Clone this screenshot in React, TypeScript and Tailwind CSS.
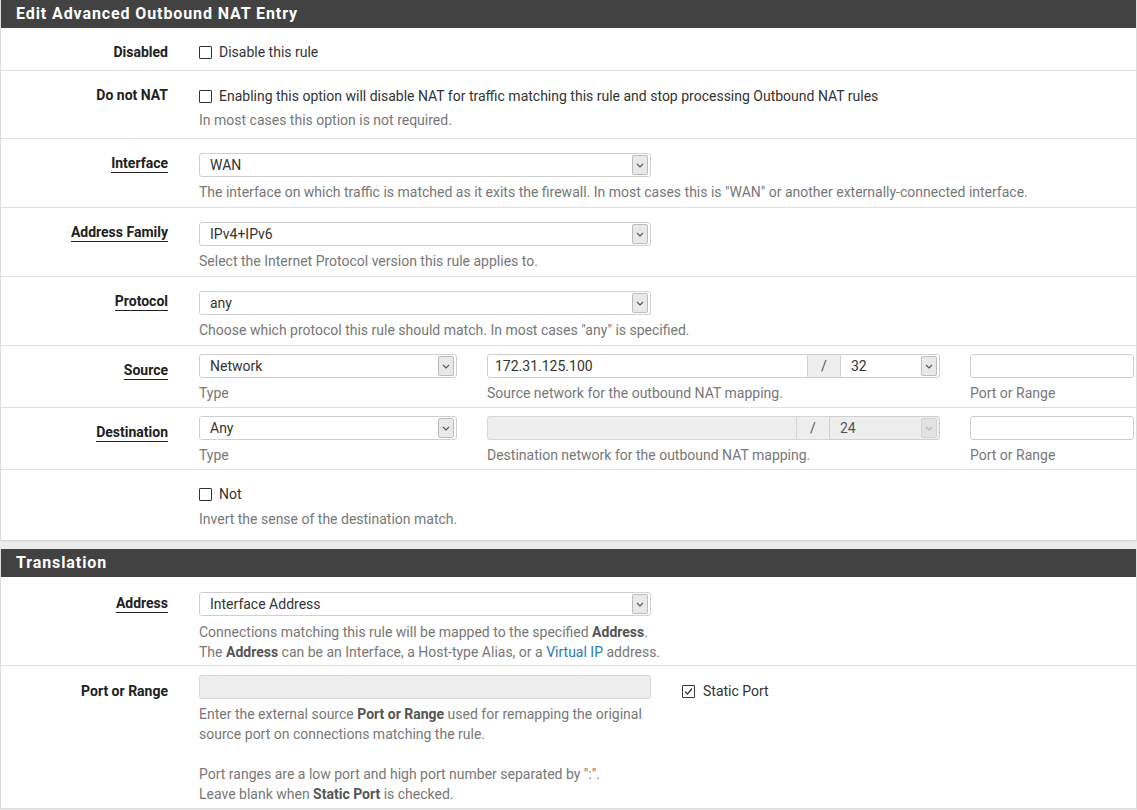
import React from "react";

const Chevron = ({ light }: { light?: boolean }) => (
  <svg width="8" height="5" viewBox="0 0 8 5" fill="none">
    <path d="M1 1l3 3 3-3" stroke={light ? "#b5b5b5" : "#555"} strokeWidth="1.1" />
  </svg>
);

function Select({
  value,
  className,
  disabled,
  rounded = "rounded-[3px]",
}: {
  value: string;
  className: string;
  disabled?: boolean;
  rounded?: string;
}) {
  return (
    <div
      className={`${className} ${rounded} h-[24px] border border-[#cfcfcf] flex items-center pl-[10px] pr-[2px] text-[14px] ${
        disabled ? "bg-[#eeeeee] text-[#555]" : "bg-white text-[#333]"
      }`}
    >
      <span className="flex-1 leading-[20px]">{value}</span>
      <div
        className={`w-[16px] h-[20px] rounded-[2px] border flex items-center justify-center ${
          disabled ? "bg-[#e2e2e2] border-[#d4d4d4]" : "bg-[#e9e9e9] border-[#bdbdbd]"
        }`}
      >
        <Chevron light={disabled} />
      </div>
    </div>
  );
}

const Checkbox = ({ checked }: { checked?: boolean }) => (
  <span className="w-[13px] h-[13px] border border-[#333] rounded-[1px] bg-white flex items-center justify-center shrink-0">
    {checked && (
      <svg width="11" height="11" viewBox="0 0 11 11" fill="none">
        <path d="M2 5.5l2.5 2.5L9 2.5" stroke="#333" strokeWidth="1.2" />
      </svg>
    )}
  </span>
);

function Row({
  label,
  underline,
  children,
  className = "",
  labelPt = "pt-[14px]",
}: {
  label?: string;
  underline?: boolean;
  children: React.ReactNode;
  className?: string;
  labelPt?: string;
}) {
  return (
    <div className={`flex border-b border-[#e0e0e0] ${className}`}>
      <div className={`w-[183px] shrink-0 pr-[16px] ${labelPt} text-right text-[14px] leading-[20px]`}>
        {label && (
          <span
            className={`font-bold text-[14px] leading-[20px] text-[#212121] ${
              underline ? "border-b-[1.5px] border-[#212121] pb-[1px]" : ""
            }`}
          >
            {label}
          </span>
        )}
      </div>
      <div className="flex-1 pl-[15px] pr-[3px]">{children}</div>
    </div>
  );
}

const Help = ({ children, className = "" }: { children: React.ReactNode; className?: string }) => (
  <div className={`text-[14px] leading-[20px] text-[#777] ${className}`}>{children}</div>
);

const Header = ({ title }: { title: string }) => (
  <div className="h-[28px] bg-[#424242] flex items-center pl-[15px]">
    <span className="text-white font-bold text-[16px] tracking-[0.9px]">{title}</span>
  </div>
);

export default function App() {
  return (
    <div
      className="w-[1137px] h-[810px] bg-[#ececec] overflow-hidden"
      style={{ fontFamily: "Roboto, 'Noto Sans', sans-serif" }}
    >
      <div className="bg-white border-x border-[#dcdcdc] shadow-[0_1px_2px_rgba(0,0,0,0.12)]">
        <Header title="Edit Advanced Outbound NAT Entry" />
        <Row label="Disabled" className="h-[43px]">
          <div className="pt-[14px] flex items-center gap-[7px] text-[14px] leading-[20px] text-[#333]">
            <Checkbox />
            <span>Disable this rule</span>
          </div>
        </Row>
        <Row label="Do not NAT" className="h-[68px]">
          <div className="pt-[15px] flex items-center gap-[7px] text-[14px] leading-[20px] text-[#333]">
            <Checkbox />
            <span>Enabling this option will disable NAT for traffic matching this rule and stop processing Outbound NAT rules</span>
          </div>
          <Help className="mt-[4px]">In most cases this option is not required.</Help>
        </Row>
        <Row label="Interface" underline className="h-[69px]">
          <div className="pt-[14px]">
            <Select value="WAN" className="w-[452px]" />
          </div>
          <Help className="mt-[5px]">
            The interface on which traffic is matched as it exits the firewall. In most cases this is "WAN" or another externally-connected interface.
          </Help>
        </Row>
        <Row label="Address Family" underline className="h-[69px]">
          <div className="pt-[14px]">
            <Select value="IPv4+IPv6" className="w-[452px]" />
          </div>
          <Help className="mt-[5px]">Select the Internet Protocol version this rule applies to.</Help>
        </Row>
        <Row label="Protocol" underline className="h-[69px]">
          <div className="pt-[14px]">
            <Select value="any" className="w-[452px]" />
          </div>
          <Help className="mt-[5px]">Choose which protocol this rule should match. In most cases "any" is specified.</Help>
        </Row>
        <Row label="Source" underline className="h-[62px]">
          <div className="pt-[8px] flex">
            <div className="w-[258px]">
              <Select value="Network" className="w-[258px]" />
              <Help className="mt-[5px]">Type</Help>
            </div>
            <div className="ml-[30px] w-[453px]">
              <div className="flex h-[24px]">
                <div className="w-[321px] border border-[#cfcfcf] rounded-l-[3px] bg-white flex items-center pl-[7px] text-[14px] text-[#333]">
                  172.31.125.100
                </div>
                <div className="w-[32px] border-y border-[#cfcfcf] bg-[#eeeeee] flex items-center justify-center text-[14px] text-[#555]">
                  /
                </div>
                <Select value="32" className="w-[100px]" rounded="rounded-r-[3px]" />
              </div>
              <Help className="mt-[5px]">Source network for the outbound NAT mapping.</Help>
            </div>
            <div className="ml-[30px] w-[164px]">
              <div className="h-[24px] border border-[#cfcfcf] rounded-[3px] bg-white" />
              <Help className="mt-[5px]">Port or Range</Help>
            </div>
          </div>
        </Row>
        <Row label="Destination" underline className="h-[62px]">
          <div className="pt-[8px] flex">
            <div className="w-[258px]">
              <Select value="Any" className="w-[258px]" />
              <Help className="mt-[5px]">Type</Help>
            </div>
            <div className="ml-[30px] w-[453px]">
              <div className="flex h-[24px]">
                <div className="w-[310px] border border-[#d6d6d6] rounded-l-[3px] bg-[#eeeeee]" />
                <div className="w-[32px] border-y border-[#d6d6d6] bg-[#eeeeee] flex items-center justify-center text-[14px] text-[#555]">
                  /
                </div>
                <Select value="24" className="w-[111px]" rounded="rounded-r-[3px]" disabled />
              </div>
              <Help className="mt-[5px]">Destination network for the outbound NAT mapping.</Help>
            </div>
            <div className="ml-[30px] w-[164px]">
              <div className="h-[24px] border border-[#cfcfcf] rounded-[3px] bg-white" />
              <Help className="mt-[5px]">Port or Range</Help>
            </div>
          </div>
        </Row>
        <Row className="h-[70px] border-b-0">
          <div className="pt-[14px] flex items-center gap-[7px] text-[14px] leading-[20px] text-[#333]">
            <Checkbox />
            <span>Not</span>
          </div>
          <Help className="mt-[5px]">Invert the sense of the destination match.</Help>
        </Row>
      </div>

      <div className="h-[9px]" />

      <div className="bg-white border-x border-[#dcdcdc] border-b border-b-[#dcdcdc]">
        <Header title="Translation" />
        <Row label="Address" underline labelPt="pt-[16px]" className="h-[89px]">
          <div className="pt-[15px]">
            <Select value="Interface Address" className="w-[452px]" />
          </div>
          <Help className="mt-[6px]">
            Connections matching this rule will be mapped to the specified <b className="text-[#555]">Address</b>.
          </Help>
          <Help>
            The <b className="text-[#555]">Address</b> can be an Interface, a Host-type Alias, or a{" "}
            <span className="text-[#2f77b3]">Virtual IP</span> address.
          </Help>
        </Row>
        <Row label="Port or Range" labelPt="pt-[15px]" className="h-[142px] border-b-0">
          <div className="pt-[9px] flex">
            <div className="w-[452px]">
              <div className="h-[24px] border border-[#d6d6d6] rounded-[3px] bg-[#eeeeee]" />
              <Help className="mt-[5px]">
                Enter the external source <b className="text-[#555]">Port or Range</b> used for remapping the original
              </Help>
              <Help>source port on connections matching the rule.</Help>
              <Help className="mt-[20px]">Port ranges are a low port and high port number separated by ":".</Help>
              <Help>
                Leave blank when <b className="text-[#555]">Static Port</b> is checked.
              </Help>
            </div>
            <div className="ml-[31px] pt-[6px] flex items-start gap-[8px] text-[14px] leading-[20px] text-[#333]">
              <span className="mt-[4px]">
                <Checkbox checked />
              </span>
              <span>Static Port</span>
            </div>
          </div>
        </Row>
      </div>
    </div>
  );
}
